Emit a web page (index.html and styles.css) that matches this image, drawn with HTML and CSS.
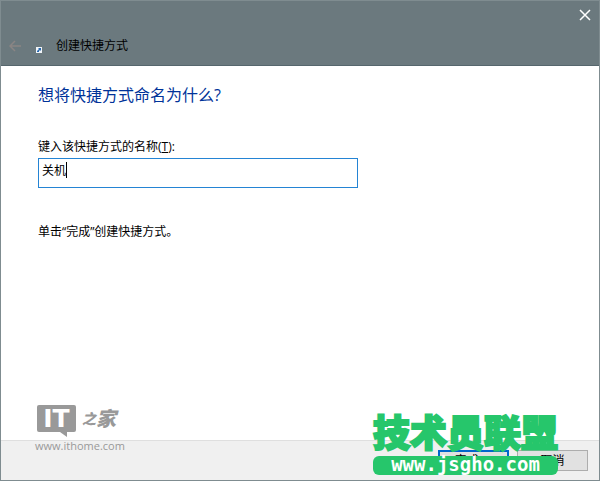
FILE: index.html
```
<!DOCTYPE html>
<html lang="zh-CN">
<head>
<meta charset="utf-8">
<title>创建快捷方式</title>
<link rel="stylesheet" href="styles.css">
</head>
<body>
<div class="window">
<header class="titlebar">
<div class="close-row">
<button class="icon-btn" type="button" aria-label="关闭">
<svg width="12" height="12" viewBox="0 0 12 12"><path d="M1 1L11 11M11 1L1 11" stroke="#fff" stroke-width="1.5" fill="none"/></svg>
</button>
</div>
<div class="nav-row">
<button class="icon-btn" type="button" aria-label="返回" disabled>
<svg width="12" height="12" viewBox="0 0 12 12"><path d="M12 6H1M6 1L1 6L6 11" stroke="#8a8584" stroke-width="1.5" fill="none"/></svg>
</button>
<svg class="shortcut-icon" width="6" height="6" viewBox="0 0 6 6"><path d="M0 0H6V6H0Z" fill="#f1f5f8"/><path d="M2 1H5V4L4 3L3 4V5H1V4L3 2Z" fill="#2869b0"/></svg>
<span class="title">创建快捷方式</span>
</div>
</header>

<main class="content">
<h1 class="heading">想将快捷方式命名为什么?</h1>
<label class="label" for="name">键入该快捷方式的名称(<u>T</u>):</label>
<div class="field">
<input class="name-input" id="name" type="text" value="关机">
<span class="caret"></span>
</div>
<p class="hint">单击“完成”创建快捷方式。</p>
</main>

<footer class="footer">
<button class="btn btn-default" type="button">完成(<u>F</u>)</button>
<button class="btn" type="button">取消</button>
</footer>

<!-- 水印 -->
<div class="ithome">
<div class="ithome-logo">
<span class="it-box">IT</span>
<span class="zhi">之</span><span class="jia">家</span>
</div>
<div class="ithome-url">www.ithome.com</div>
</div>
<div class="union">
<div class="union-name">技术员联盟</div>
<div class="union-url">www.jsgho.com</div>
</div>
</div>
</body>
</html>
```
FILE: styles.css
```
* {
box-sizing: border-box;
}

body {
margin: 0;
font-family: "Open Sans", "Noto Sans CJK SC", sans-serif;
font-size: 12px;
line-height: 16px;
color: #000;
}

button, input {
font: inherit;
color: inherit;
}

.window {
position: relative;
display: flex;
flex-direction: column;
min-height: 100vh;
background: #fff;
border: 1px solid #7f8c90;
overflow: hidden;
}

/* 标题栏 */
.titlebar {
background: #6b797e;
border-bottom: 1px solid #56666d;
padding-bottom: 11px;
}

.close-row {
display: flex;
justify-content: flex-end;
padding: 8px 8px 0 0;
}

.nav-row {
display: flex;
align-items: center;
padding: 17px 0 0 8px;
}

.icon-btn {
display: flex;
padding: 0;
border: 0;
background: none;
}

.shortcut-icon {
margin: 8px 14px 0 15px;
}

/* 内容 */
.content {
flex: 1;
padding: 17px 37px;
}

.heading {
margin: 0 0 32px;
font-size: 16px;
line-height: 24px;
font-weight: normal;
color: #003399;
}

.label {
display: block;
margin-bottom: 3px;
}

.field {
position: relative;
width: 61%;
}

.name-input {
display: block;
width: 100%;
height: 30px;
padding: 0 3px 6px;
border: 1px solid #2484d4;
background: #fff;
outline: 0;
}

.caret {
position: absolute;
left: 28px;
top: 4px;
width: 1px;
height: 16px;
background: #000;
}

.hint {
margin: 36px 0 0;
}

/* 底部按钮 */
.footer {
display: flex;
justify-content: flex-end;
gap: 8px;
padding: 9px 11px;
background: #f0f0f0;
border-top: 1px solid #dfdfdf;
}

.btn {
width: 71px;
height: 21px;
padding: 0;
line-height: 16px;
background: #e1e1e1;
border: 1px solid #adadad;
}

.btn-default {
border: 2px solid #0066cc;
}

/* 水印 */
.ithome {
position: absolute;
left: 34px;
bottom: 26px;
color: #999;
}

.ithome-logo {
display: flex;
align-items: center;
padding-left: 2px;
}

.it-box {
position: relative;
width: 39px;
height: 27px;
margin-right: 6px;
border-radius: 2px;
background: #999;
color: #fff;
font: bold 25px/28px "DejaVu Sans", sans-serif;
text-align: center;
}

.it-box::after {
content: "";
position: absolute;
right: 9px;
top: 27px;
border-top: 5px solid #999;
border-left: 7px solid transparent;
}

.zhi, .jia {
font-style: italic;
font-weight: 900;
}

.zhi {
font-size: 14px;
}

.jia {
font-size: 20px;
line-height: 27px;
}

.ithome-url {
margin-top: 6px;
font-size: 11px;
line-height: 16px;
}

.union {
position: absolute;
left: 372px;
bottom: 5px;
color: #26c66b;
}

.union-name {
font-size: 37px;
line-height: 41px;
margin-bottom: 3px;
font-weight: 900;
-webkit-text-stroke: 2px #26c66b;
}

.union-url {
height: 19px;
border-radius: 6px;
background: #26c66b;
color: #fff;
font: bold 19px/17px "DejaVu Sans Mono", monospace;
text-align: center;
}
```
